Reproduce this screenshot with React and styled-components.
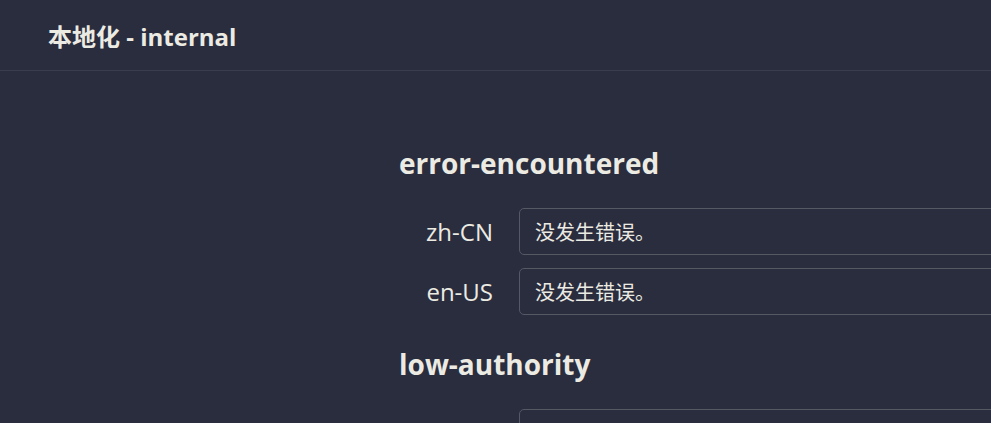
import React from "react";
import styled, { createGlobalStyle } from "styled-components";

const Global = createGlobalStyle`
  html, body { margin: 0; padding: 0; background: #2a2d3e; overflow: hidden; }
  body { font-family: "Open Sans", "Noto Sans CJK SC", sans-serif; color: #ecebe3; }
`;

const Page = styled.div`
  min-height: 423px;
  background: #2a2d3e;
`;

const Header = styled.header`
  height: 71px;
  border-bottom: 1px solid #3a3d4e;
  display: flex;
  align-items: center;
  padding-left: 48px;
  box-sizing: border-box;
`;

const Title = styled.h1`
  margin: 0;
  font-size: 24px;
  font-weight: 700;
  color: #ecebe3;
`;

const Main = styled.main`
  display: flex;
  flex-direction: column;
  gap: 31px;
  padding: 74px 0 0 399px;
`;

const Section = styled.section`
  display: flex;
  flex-direction: column;
  gap: 13px;
`;

const Heading = styled.h2`
  margin: 0 0 13px;
  font-size: 28px;
  font-weight: 700;
  line-height: 37px;
  color: #ecebe3;
`;

const Row = styled.div`
  display: grid;
  grid-template-columns: 120px 600px;
  align-items: center;
`;

const Label = styled.label`
  text-align: right;
  padding-right: 26px;
  font-size: 24px;
  line-height: 32px;
  color: #ecebe3;
`;

const Input = styled.input`
  box-sizing: border-box;
  height: 47px;
  width: 600px;
  background: #2a2d3e;
  border: 1.5px solid #55576380;
  border-color: #565864;
  border-radius: 5px;
  padding: 0 15px;
  font-family: "Noto Sans CJK SC", sans-serif;
  font-size: 20px;
  color: #ecebe3;
  outline: none;
`;

const data = [
  { key: "error-encountered", values: { "zh-CN": "没发生错误。", "en-US": "没发生错误。" } },
  { key: "low-authority", values: { "zh-CN": "", "en-US": "" } },
];

export default function App() {
  return (
    <Page>
      <Global />
      <Header>
        <Title>本地化 - internal</Title>
      </Header>
      <Main>
        {data.map((s) => (
          <Section key={s.key}>
            <Heading>{s.key}</Heading>
            {Object.entries(s.values).map(([lang, v]) => (
              <Row key={lang}>
                <Label>{lang}</Label>
                <Input defaultValue={v} />
              </Row>
            ))}
          </Section>
        ))}
      </Main>
    </Page>
  );
}
